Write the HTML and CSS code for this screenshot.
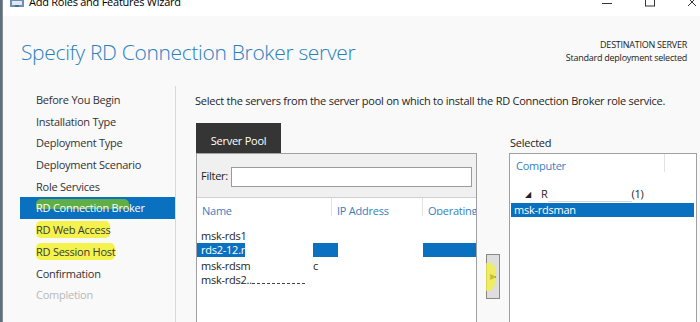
FILE: index.html
```html
<!DOCTYPE html>
<html lang="en">
<head>
    <meta charset="UTF-8">
    <title>Add Roles and Features Wizard</title>
    <link rel="stylesheet" href="styles.css">
</head>
<body>
    <div class="window">
        <div class="titlebar">
            <svg class="app-icon" width="14" height="8" viewBox="0 0 14 8">
                <rect x="0" y="0" width="14" height="7" fill="#6d8fb5"/>
                <rect x="2" y="1" width="10" height="4" fill="#dfe8f2"/>
                <rect x="5" y="5" width="4" height="2" fill="#4a6a90"/>
            </svg>
            <span class="title">Add Roles and Features Wizard</span>
            <div class="controls">
                <svg width="12" height="8" viewBox="0 0 12 8"><line x1="1" y1="3.5" x2="11" y2="3.5" stroke="#333" stroke-width="1"/></svg>
                <svg width="12" height="8" viewBox="0 0 12 8"><rect x="1.5" y="-4" width="9" height="10" fill="none" stroke="#333" stroke-width="1"/></svg>
                <svg width="12" height="8" viewBox="0 0 12 8"><path d="M1 -2 L9 6 M9 -2 L1 6" stroke="#333" stroke-width="1"/></svg>
            </div>
        </div>

        <div class="header">
            <h1>Specify RD Connection Broker server</h1>
            <div class="dest">
                <div>DESTINATION SERVER</div>
                <div>Standard deployment selected</div>
            </div>
        </div>

        <div class="main">
            <ul class="steps">
                <li>Before You Begin</li>
                <li>Installation Type</li>
                <li>Deployment Type</li>
                <li>Deployment Scenario</li>
                <li>Role Services</li>
                <li class="active"><span class="mark green">RD Connection Bro</span>ker</li>
                <li><span class="mark yellow">RD Web Access</span></li>
                <li><span class="mark yellow">RD Session Host</span></li>
                <li>Confirmation</li>
                <li class="disabled">Completion</li>
            </ul>

            <div class="content">
                <p class="intro">Select the servers from the server pool on which to install the RD Connection Broker role service.</p>

                <div class="pools">
                    <div class="pool">
                        <div class="tab">Server Pool</div>
                        <div class="panel">
                            <div class="filter">
                                <label for="filter">Filter:</label>
                                <input type="text" id="filter">
                            </div>
                            <div class="list">
                                <div class="list-head">
                                    <div class="col col-name">Name</div>
                                    <div class="col col-ip">IP Address</div>
                                    <div class="col col-os">Operating</div>
                                </div>
                                <div class="row">msk-rds1</div>
                                <div class="row row-sel">
                                    <span class="sel-a">rds2-12.r</span>
                                    <span class="hide-a"></span>
                                    <span class="sel-b"></span>
                                    <span class="hide-b"></span>
                                    <span class="sel-c"></span>
                                </div>
                                <div class="row"><span class="cut">msk-rdsm</span>c</div>
                                <div class="row"><span class="cut-b">msk-rds2..</span><span class="dashes"></span></div>
                            </div>
                        </div>
                    </div>

                    <div class="mover">
                        <button class="add">&#9654;<span class="mark-btn"></span></button>
                    </div>

                    <div class="selected">
                        <div class="sel-label">Selected</div>
                        <div class="panel sel-panel">
                            <div class="sel-head">
                                <div class="col col-comp">Computer</div>
                                <div class="col"></div>
                            </div>
                            <div class="group">
                                <span class="tri">&#9698;</span>
                                <span>R</span>
                                <span class="redact"></span>
                                <span>(1)</span>
                            </div>
                            <div class="sel-row">msk-rdsman</div>
                        </div>
                    </div>
                </div>
            </div>
        </div>
    </div>
</body>
</html>
```

FILE: styles.css
```css
body {
    margin: 0;
    width: 700px;
    height: 322px;
    overflow: hidden;
    background-color: #5b6f86;
    font-family: "Open Sans", "Noto Sans", sans-serif;
    font-size: 11px;
    letter-spacing: -0.25px;
    color: #1e1e1e;
}

.window {
    margin-left: 2px;
    height: 322px;
    border-left: 1px solid #8c8c8c;
    background-color: #f9f9f9;
    display: flex;
    flex-direction: column;
}

/* title bar */
.titlebar {
    height: 16px;
    background-color: #fff;
    display: flex;
    align-items: flex-start;
    overflow: hidden;
}

.app-icon {
    margin: 0 5px 0 7px;
}

.title {
    font-size: 11px;
    line-height: 12px;
    margin-top: -4px;
    color: #000;
}

.controls {
    margin-left: auto;
    display: flex;
    gap: 31px;
    padding-right: 1px;
}

/* header */
.header {
    height: 70px;
    display: flex;
    justify-content: space-between;
    align-items: flex-start;
}

.header h1 {
    margin: 24px 0 0 18px;
    font-size: 21px;
    font-weight: 300;
    line-height: 24px;
    color: #2a80bd;
    letter-spacing: -0.33px;
}

.dest {
    margin: 22px 13px 0 0;
    text-align: right;
    font-size: 9px;
    line-height: 13px;
    color: #222;
}

/* main */
.main {
    flex: 1;
    display: grid;
    grid-template-columns: 173px 1fr;
    min-height: 0;
}

.steps {
    list-style: none;
    margin: 0 0 0 17px;
    padding: 3px 0 0;
    border-right: 1px solid #d9d9d9;
}

.steps li {
    height: 21.7px;
    line-height: 21.7px;
    padding-left: 16px;
    color: #333;
    white-space: nowrap;
}

.steps li.active {
    background-color: #0a70c0;
    color: #fff;
}

.steps li.disabled {
    color: #b8b8b8;
}

.mark {
    border-radius: 5px;
    padding: 1px 0;
}

.mark.yellow {
    background-color: #f4f24c;
    color: #3a3a3a;
}

.mark.green {
    background: linear-gradient(#5fae48 0%, #5fae48 60%, transparent 60%);
}

.content {
    padding-left: 20px;
    display: flex;
    flex-direction: column;
    min-height: 0;
}

.intro {
    margin: 8px 0 0 -1px;
    line-height: 14px;
    white-space: nowrap;
}

.pools {
    margin-top: 15px;
    flex: 1;
    display: grid;
    grid-template-columns: 281px 32px 188px;
    min-height: 0;
}

.pool, .selected {
    display: flex;
    flex-direction: column;
    min-height: 0;
}

.tab {
    width: 85px;
    height: 30px;
    line-height: 36px;
    background-color: #353535;
    color: #fff;
    text-align: center;
}

.panel {
    flex: 1;
    border: 1px solid #a0a0a0;
    border-bottom: none;
    background-color: #f0f0f0;
    display: flex;
    flex-direction: column;
}

.filter {
    height: 43px;
    display: flex;
    align-items: center;
    padding: 0 4px;
    gap: 3px;
}

.filter label {
    color: #222;
}

.filter input {
    flex: 1;
    height: 20px;
    box-sizing: border-box;
    border: 1px solid #9a9a9a;
    margin: 3px 0 0;
}

.list {
    flex: 1;
    background-color: #fff;
    border-top: 1px solid #cfcfcf;
}

.list-head {
    display: flex;
    height: 31px;
}

.col {
    color: #3a7ec0;
    padding: 5px 0 0 5px;
    height: 17px;
    line-height: 14px;
    box-sizing: border-box;
    white-space: nowrap;
    overflow: hidden;
}

.col-name {
    width: 135px;
    height: 18px;
    border-right: 1px solid #e3e3e3;
    padding-top: 6px;
}

.col-ip {
    width: 91px;
    height: 18px;
    border-right: 1px solid #e3e3e3;
    padding-top: 6px;
}

.col-os {
    flex: 1;
    padding-top: 6px;
}

.row {
    height: 14px;
    line-height: 14px;
    padding-left: 4px;
    display: flex;
    white-space: nowrap;
}

.row-sel {
    padding-left: 0;
}

.sel-a {
    width: 44px;
    padding-left: 4px;
    background-color: #0a70c0;
    color: #fff;
    overflow: hidden;
}

.hide-a {
    width: 68px;
}

.sel-b {
    width: 25px;
    background-color: #0a70c0;
}

.hide-b {
    width: 85px;
}

.sel-c {
    flex: 1;
    background-color: #0a70c0;
}

.row:nth-child(4) {
    margin-top: 2px;
}

.cut {
    width: 112px;
}

.cut-b {
    width: 51px;
}

.dashes {
    width: 53px;
    height: 10px;
    border-bottom: 1px dashed #444;
}

/* mover */
.mover {
    display: flex;
    justify-content: center;
    padding-top: 131px;
}

.add {
    position: relative;
    width: 14px;
    height: 45px;
    padding: 0;
    border: 1px solid #888;
    background-color: #dedede;
    font-size: 8px;
    color: #333;
    cursor: pointer;
}

.mark-btn {
    position: absolute;
    left: -1px;
    top: 8px;
    width: 9px;
    height: 28px;
    background-color: rgba(244, 242, 60, 0.75);
    border-radius: 0 5px 8px 0;
}

/* selected list */
.sel-label {
    height: 30px;
    padding: 13px 0 0 1px;
    box-sizing: border-box;
    line-height: 14px;
    color: #222;
}

.sel-panel {
    background-color: #fff;
}

.sel-head {
    display: flex;
    height: 22px;
}

.col-comp {
    width: 155px;
    height: 18px;
    border-right: 1px solid #e3e3e3;
    padding-top: 5px;
    padding-left: 6px;
}

.group {
    height: 14px;
    line-height: 14px;
    margin-top: 11px;
    display: flex;
    align-items: center;
    padding-left: 15px;
}

.tri {
    font-size: 8px;
    width: 16px;
    color: #222;
}

.redact {
    width: 84px;
    height: 14px;
    border-bottom: 1px solid #d6d6d6;
}

.sel-row {
    margin: 2px 2px 0 1px;
    height: 14px;
    line-height: 14px;
    padding-left: 3px;
    background-color: #0a70c0;
    color: #fff;
}
```
